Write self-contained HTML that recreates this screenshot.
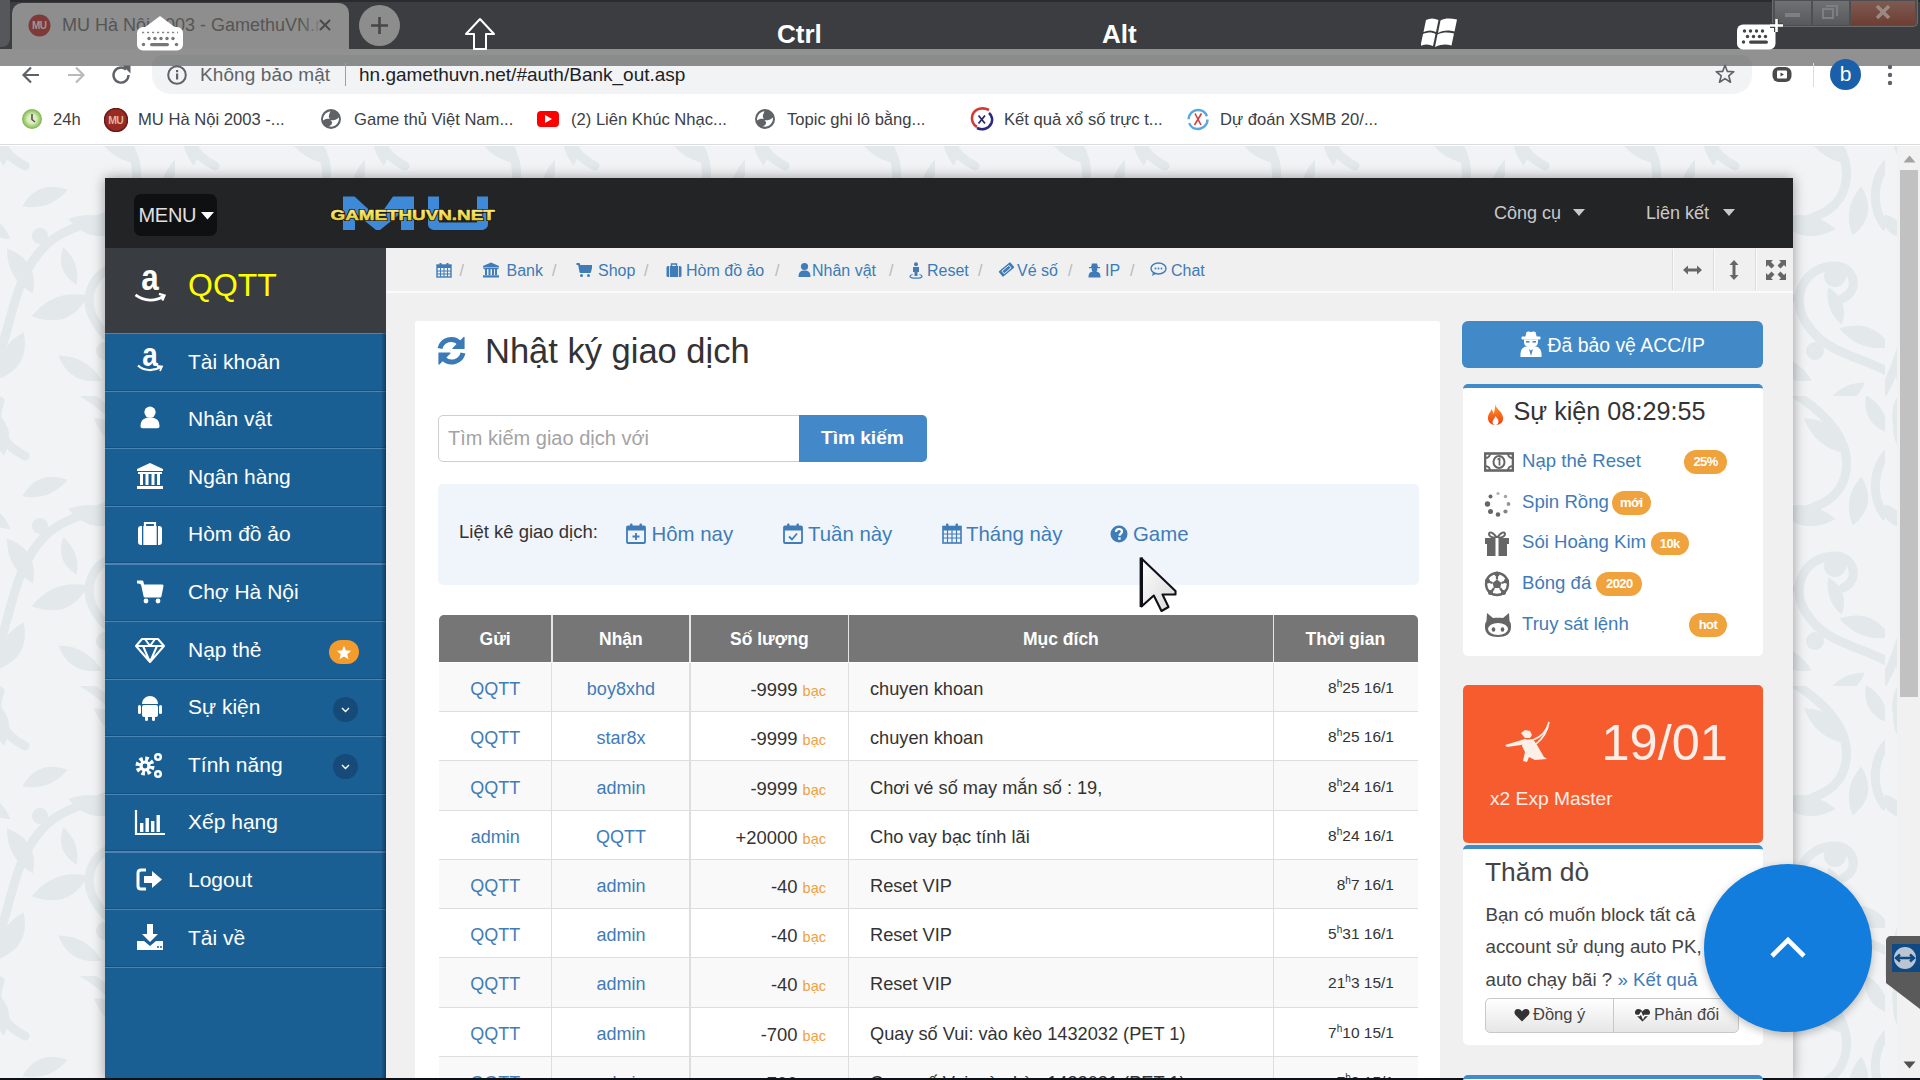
<!DOCTYPE html>
<html><head><meta charset="utf-8">
<style>
*{box-sizing:border-box;margin:0;padding:0}
html,body{width:1920px;height:1080px;overflow:hidden;font-family:"Liberation Sans",sans-serif;background:#fff}
.a{position:absolute}
.nw{white-space:nowrap}
/* browser chrome */
#tabstrip{left:0;top:0;width:1920px;height:49px;background:#3b3d40}
#tab{left:12px;top:3px;width:337px;height:50px;background:#8e8e8e;border-radius:10px 10px 0 0}
#band{left:0;top:49px;width:1920px;height:16.5px;background:#919191}
#toolbar{left:0;top:65px;width:1920px;height:32px;background:#fff}
#omni{left:152px;top:56px;width:1600px;height:38px;background:#f1f3f4;border-radius:19px}
#bm{left:0;top:97px;width:1920px;height:48px;background:#fff;border-bottom:1px solid #dadce0}
.bmt{font-size:16.6px;color:#3c4043;top:110px}
/* page */
#page{left:0;top:146px;width:1897px;height:934px;background:#f1f3f5}
#sb{left:1897px;top:146px;width:23px;height:934px;background:#f1f1f1}
#thumb{left:1900px;top:170px;width:18.2px;height:527px;background:#c1c1c1}
#cont{left:105px;top:178px;width:1688px;height:902px;background:#f0f0f0;box-shadow:0 0 12px rgba(0,0,0,.38)}
#nav{left:105px;top:178px;width:1688px;height:70px;background:#232426}
#side{left:105px;top:248px;width:281px;height:832px;background:#1a5f94}
#sidehead{left:105px;top:248px;width:281px;height:85px;background:#393c40}
.mi{left:105px;width:281px;height:58px;border-top:1px solid #4b82b0}
.mt{left:188px;font-size:21px;color:#fff}
.mic{left:133px;width:32px;text-align:center}
#bc{left:386px;top:248px;width:1407px;height:44.5px;background:#f0f0f0;border-bottom:2.5px solid #fafafa}
.bct{top:261.5px;font-size:16px;color:#3d7bb6}
.bcs{top:261.5px;font-size:16px;color:#b8b8b8}
#panel{left:415px;top:321px;width:1025px;height:760px;background:#fff;border-radius:3px}
.th{top:615px;height:48px;color:#fff;font-weight:bold;font-size:19px;text-align:center;line-height:48px}
.td{font-size:19px;line-height:49px}
.lk{color:#3d7ab5}
.dk{color:#333}
.bac{color:#f0ad4e;font-size:15px}
</style></head><body>
<!-- chrome -->
<div id="tabstrip" class="a"></div>
<div class="a" style="left:0;top:0;width:1920px;height:2px;background:#2a2b2d"></div>
<div class="a" style="left:0;top:0;width:10px;height:47px;background:#56575a;border-radius:0 0 8px 0"></div>
<div id="tab" class="a"></div>
<svg class="a" style="left:28px;top:14px" width="23" height="23" viewBox="0 0 23 23"><circle cx="11.5" cy="11.5" r="11" fill="#7d3a38"/><text x="11.5" y="15" font-family="Liberation Sans" font-weight="bold" font-size="10" fill="#a09890" text-anchor="middle" textLength="15">MU</text></svg>
<div class="a nw" style="left:62px;top:15px;font-size:18px;color:#555;width:258px;overflow:hidden">MU Hà Nội 2003 - GamethuVN.net</div>
<div class="a" style="left:300px;top:10px;width:25px;height:30px;background:linear-gradient(90deg,rgba(142,142,142,0),#8e8e8e)"></div>
<svg class="a" style="left:318px;top:18px" width="14" height="14" viewBox="0 0 14 14"><path d="M2 2L12 12M12 2L2 12" stroke="#4a4a4a" stroke-width="2"/></svg>
<div class="a" style="left:359px;top:5px;width:41px;height:41px;border-radius:50%;background:#8d8d8d"></div>
<svg class="a" style="left:369px;top:15px" width="21" height="21" viewBox="0 0 21 21"><path d="M10.5 2V19M2 10.5H19" stroke="#474747" stroke-width="2.6"/></svg>
<div id="toolbar" class="a"></div>
<div class="a" style="left:152px;top:65px;width:1600px;height:29px;background:#f1f3f4;border-radius:0 0 19px 19px"></div>
<div id="band" class="a"></div>
<div class="a" style="left:152px;top:55px;width:1600px;height:10.5px;background:#8a8b8b;border-radius:19px 19px 0 0"></div>
<!-- toolbar icons -->
<svg class="a" style="left:20px;top:64px" width="22" height="22" viewBox="0 0 22 22"><path d="M19 11H4M11 3.5L3.5 11L11 18.5" stroke="#5f6368" stroke-width="2.2" fill="none"/></svg>
<svg class="a" style="left:65px;top:64px" width="22" height="22" viewBox="0 0 22 22"><path d="M3 11H18M11 3.5L18.5 11L11 18.5" stroke="#b9babc" stroke-width="2.2" fill="none"/></svg>
<svg class="a" style="left:110px;top:64px" width="22" height="22" viewBox="0 0 22 22"><path d="M18.5 11A7.5 7.5 0 1 1 16 5.5" stroke="#5f6368" stroke-width="2.4" fill="none"/><path d="M12.5 1.5H20.5V9.5Z" fill="#5f6368"/></svg>
<svg class="a" style="left:166px;top:64px" width="22" height="22" viewBox="0 0 22 22"><circle cx="11" cy="11" r="8.8" stroke="#5f6368" stroke-width="2" fill="none"/><rect x="10" y="9.5" width="2.2" height="6" fill="#5f6368"/><rect x="10" y="6" width="2.2" height="2.2" fill="#5f6368"/></svg>
<div class="a nw" style="left:200px;top:64px;font-size:19px;color:#5f6368;letter-spacing:0.1px">Không bảo mật</div>
<div class="a" style="left:345px;top:63px;width:1px;height:23px;background:#9aa0a6"></div>
<div class="a nw" style="left:359px;top:64px;font-size:19px;color:#202124">hn.gamethuvn.net/#auth/Bank_out.asp</div>
<svg class="a" style="left:1714px;top:63px" width="22" height="22" viewBox="0 0 24 24"><path d="M12 2.5L14.6 9.2L21.6 9.5L16.1 14L18 21L12 17L6 21L7.9 14L2.4 9.5L9.4 9.2Z" stroke="#5f6368" stroke-width="1.8" fill="none" stroke-linejoin="round"/></svg>
<svg class="a" style="left:1771px;top:64px" width="22" height="21" viewBox="0 0 22 21"><rect x="1.5" y="3" width="19" height="15" rx="6" fill="#4a4a4a"/><rect x="6" y="6.5" width="10" height="8" rx="1" fill="#fff"/><path d="M9.5 8.5L13 10.5L9.5 12.5Z" fill="#4a4a4a"/></svg>
<div class="a" style="left:1813px;top:63px;width:1px;height:24px;background:#dadce0"></div>
<div class="a" style="left:1830px;top:59px;width:31px;height:31px;border-radius:50%;background:#1a5fa9;color:#fff;font-size:21px;text-align:center;line-height:30px">b</div>
<svg class="a" style="left:1885px;top:63px" width="10" height="24" viewBox="0 0 10 24"><circle cx="5" cy="4" r="2.2" fill="#5f6368"/><circle cx="5" cy="12" r="2.2" fill="#5f6368"/><circle cx="5" cy="20" r="2.2" fill="#5f6368"/></svg>
<!-- overlay band -->

<!-- keyboard OSK icons -->
<svg class="a" style="left:136px;top:15px" width="48" height="36" viewBox="0 0 48 36"><rect x="1" y="12" width="46" height="23.5" rx="6" fill="#fff"/><path d="M24 1L42 14.5H6Z" fill="#fff"/><path d="M6 17.5H42" stroke="#888" stroke-width="1.3" stroke-dasharray="2.2 2.8"/><g fill="#777"><circle cx="13" cy="23.5" r="1.7"/><circle cx="19" cy="23.5" r="1.7"/><circle cx="25" cy="23.5" r="1.7"/><circle cx="31" cy="23.5" r="1.7"/><circle cx="37" cy="23.5" r="1.7"/><circle cx="7.5" cy="29.5" r="1.7"/><circle cx="40.5" cy="29.5" r="1.7"/></g><rect x="14" y="28" width="19" height="3.2" rx="1.6" fill="#777"/></svg>
<svg class="a" style="left:464px;top:17px" width="32" height="34" viewBox="0 0 32 34"><path d="M16 2L30 17H22V32H10V17H2Z" stroke="#fff" stroke-width="2" fill="none" stroke-linejoin="round"/></svg>
<div class="a nw" style="left:777px;top:19px;font-size:26px;font-weight:bold;color:#fff">Ctrl</div>
<div class="a nw" style="left:1102px;top:19px;font-size:26px;font-weight:bold;color:#fff">Alt</div>
<svg class="a" style="left:1421px;top:16px" width="38" height="36" viewBox="0 0 38 36"><g fill="#fff"><path d="M5 4C9 2 13 2 17.5 4L15 16C11 14 7 14 2.5 16Z"/><path d="M19.5 4.5C24 2 29 2 36 3.5L33.5 15.5C27 14 23 14 17 17Z"/><path d="M2 18C7 16 11 16 14.5 18L12 30C8 28 4 28 -0.5 30Z"/><path d="M16.5 18.5C22 16 27 16 33 17.5L30.5 29.5C25 28 21 28 14 31Z"/></g></svg>

<!-- window controls -->
<div class="a" style="left:1772px;top:0;width:146px;height:27px;border:1px solid #6a6b6d;border-top:0;border-radius:0 0 5px 5px;background:#4e4f52"></div>
<div class="a" style="left:1775px;top:1px;width:36px;height:24px;background:linear-gradient(#707173,#58595c)"></div>
<div class="a" style="left:1785px;top:13px;width:15px;height:4px;background:#7e7f81"></div>
<div class="a" style="left:1813px;top:1px;width:36px;height:24px;background:linear-gradient(#707173,#58595c)"></div>
<div class="a" style="left:1822px;top:8px;width:12px;height:11px;border:2.5px solid #7e7f81"></div>
<div class="a" style="left:1826px;top:5px;width:12px;height:11px;border-top:2px solid #7e7f81;border-right:2px solid #7e7f81"></div>
<div class="a" style="left:1851px;top:1px;width:64px;height:24px;background:linear-gradient(#7e5b52,#6e3e33)"></div>
<svg class="a" style="left:1875px;top:5px" width="16" height="14" viewBox="0 0 16 14"><path d="M2 1L14 13M14 1L2 13" stroke="#9a8a86" stroke-width="3.5"/></svg>
<svg class="a" style="left:1735px;top:16px" width="50" height="36" viewBox="0 0 50 36"><rect x="2" y="8.5" width="38.5" height="25" rx="6" fill="#fff"/><g fill="#444"><circle cx="9.5" cy="15" r="1.7"/><circle cx="15.5" cy="15" r="1.7"/><circle cx="21.5" cy="15" r="1.7"/><circle cx="27.5" cy="15" r="1.7"/><circle cx="12.5" cy="20.5" r="1.7"/><circle cx="18.5" cy="20.5" r="1.7"/><circle cx="24.5" cy="20.5" r="1.7"/><circle cx="30.5" cy="20.5" r="1.7"/><circle cx="8.5" cy="26" r="1.7"/></g><rect x="14" y="24.5" width="19" height="3.2" rx="1.6" fill="#444"/><path d="M41.5 3V16M35 9.5H48" stroke="#444" stroke-width="5"/><path d="M41.5 3V16M35 9.5H48" stroke="#fff" stroke-width="2.6"/></svg>
<!-- bookmarks -->
<div id="bm" class="a"></div>
<div class="a" style="left:22px;top:109px;width:20px;height:20px;border-radius:50%;background:radial-gradient(circle,#ddeec0 30%,#7ab648 70%)"></div>
<svg class="a" style="left:24px;top:111px" width="16" height="16" viewBox="0 0 16 16"><path d="M8 3V8.5L11 11" stroke="#555" stroke-width="1.6" fill="none"/></svg>
<div class="a nw bmt" style="left:53px">24h</div>
<svg class="a" style="left:104px;top:108px" width="24" height="24" viewBox="0 0 23 23"><circle cx="11.5" cy="11.5" r="11" fill="#9a2a24"/><circle cx="11.5" cy="11.5" r="11" fill="none" stroke="#6a1a18" stroke-width="1.5"/><text x="11.5" y="15" font-family="Liberation Sans" font-weight="bold" font-size="10" fill="#d8b8a0" text-anchor="middle" textLength="15">MU</text></svg>
<div class="a nw bmt" style="left:138px">MU Hà Nội 2003 -...</div>
<svg class="a" style="left:320px;top:108px" width="22" height="22" viewBox="0 0 22 22"><circle cx="11" cy="11" r="10" fill="#5f6368"/><path d="M3 12.5C2.8 8 5.5 4 10.5 3.2C10 4.5 9.5 5.5 9 7C8.5 8.5 9 10 10 11C7.5 10.5 5 11 3 12.5Z" fill="#fff"/><path d="M19 9.5C19.3 14 16.5 18 11.5 18.8L8.5 18.3C10 18 11.5 17 12 15.5C12.5 14 11.5 13 10.5 12.2C13 12.5 16.5 12 19 9.5Z" fill="#fff"/></svg>
<div class="a nw bmt" style="left:354px">Game thủ Việt Nam...</div>
<div class="a" style="left:537px;top:111px;width:22px;height:16px;border-radius:4px;background:#f00"></div>
<svg class="a" style="left:544px;top:114px" width="9" height="10" viewBox="0 0 9 10"><path d="M1 1L8 5L1 9Z" fill="#fff"/></svg>
<div class="a nw bmt" style="left:571px">(2) Liên Khúc Nhạc...</div>
<svg class="a" style="left:754px;top:108px" width="22" height="22" viewBox="0 0 22 22"><circle cx="11" cy="11" r="10" fill="#5f6368"/><path d="M3 12.5C2.8 8 5.5 4 10.5 3.2C10 4.5 9.5 5.5 9 7C8.5 8.5 9 10 10 11C7.5 10.5 5 11 3 12.5Z" fill="#fff"/><path d="M19 9.5C19.3 14 16.5 18 11.5 18.8L8.5 18.3C10 18 11.5 17 12 15.5C12.5 14 11.5 13 10.5 12.2C13 12.5 16.5 12 19 9.5Z" fill="#fff"/></svg>
<div class="a nw bmt" style="left:787px">Topic ghi lô bằng...</div>
<svg class="a" style="left:969px;top:107px" width="26" height="24" viewBox="0 0 26 24"><path d="M20 3C14 0 6 1 3.5 8C2 13 4 18 8 20" stroke="#d33a32" stroke-width="2.6" fill="none"/><path d="M8 21C13 23.5 20 22 22.5 16C24 12 22.5 8 20 6" stroke="#2a2a80" stroke-width="2.6" fill="none"/><path d="M9.5 8.5L16 16.5M16 8.5L9.5 16.5" stroke="#2a2a70" stroke-width="1.8"/></svg>
<div class="a nw bmt" style="left:1004px">Kết quả xổ số trực t...</div>
<svg class="a" style="left:1186px;top:107px" width="24" height="24" viewBox="0 0 24 24"><circle cx="12" cy="12.5" r="9.5" stroke="#58a8e0" stroke-width="2.4" fill="none" stroke-dasharray="26 4"/><path d="M9 6.5L15 18M15.5 6.5L8.5 18" stroke="#d04040" stroke-width="1.6"/></svg>
<div class="a nw bmt" style="left:1220px">Dự đoán XSMB 20/...</div>
<!-- page -->
<div id="page" class="a"></div>
<svg class="a" style="left:0;top:146px" width="1897" height="934"><defs><pattern id="fl" width="190" height="290" patternUnits="userSpaceOnUse" x="-15" y="-40"><path d="M-10 300C30 240 20 180 60 140C90 110 140 120 150 80C160 40 120 10 95 -5" stroke="#e3e8eb" stroke-width="9" fill="none" stroke-linecap="round"/><path d="M200 270C170 250 130 250 110 215C95 190 110 160 140 160C160 160 165 185 148 192" stroke="#e3e8eb" stroke-width="9" fill="none" stroke-linecap="round"/><path d="M40 60C20 50 5 30 15 5" stroke="#e3e8eb" stroke-width="9" fill="none" stroke-linecap="round"/><path d="M190 120C175 100 178 70 195 55" stroke="#e3e8eb" stroke-width="9" fill="none" stroke-linecap="round"/><path d="M11.2 273.8Q45.8 262.0 38.8 226.2Q10.5 241.6 11.2 273.8Z" fill="#e3e8eb"/><path d="M46.8 210.3Q83.9 224.4 103.2 189.7Q68.8 182.9 46.8 210.3Z" fill="#e3e8eb"/><path d="M48.0 187.5Q54.1 154.0 22.0 142.5Q21.7 172.7 48.0 187.5Z" fill="#e3e8eb"/><path d="M83.4 113.0Q107.8 141.6 140.6 123.0Q114.9 101.5 83.4 113.0Z" fill="#e3e8eb"/><path d="M157.7 129.6Q183.7 108.8 166.3 80.4Q146.8 102.3 157.7 129.6Z" fill="#e3e8eb"/><path d="M151.1 57.7Q144.1 23.1 108.9 22.3Q120.1 51.8 151.1 57.7Z" fill="#e3e8eb"/><path d="M82.6 83.8Q53.2 73.2 37.4 100.2Q64.8 105.2 82.6 83.8Z" fill="#e3e8eb"/><path d="M195.8 241.4Q177.5 211.3 144.2 222.6Q164.7 246.5 195.8 241.4Z" fill="#e3e8eb"/><path d="M73.3 249.5Q85.0 279.3 116.7 274.5Q102.0 249.9 73.3 249.5Z" fill="#e3e8eb"/><path d="M130.1 299.5Q159.0 303.6 169.9 276.5Q143.7 277.1 130.1 299.5Z" fill="#e3e8eb"/><path d="M18.8 59.7Q32.7 34.9 11.2 16.3Q2.6 40.2 18.8 59.7Z" fill="#e3e8eb"/><path d="M171.0 -1.1Q166.4 27.0 193.0 37.1Q192.9 11.7 171.0 -1.1Z" fill="#e3e8eb"/><path d="M78.2 141.2Q70.0 165.5 91.8 178.8Q95.5 156.2 78.2 141.2Z" fill="#e3e8eb"/><path d="M146.8 218.8Q155.0 194.5 133.2 181.2Q129.5 203.8 146.8 218.8Z" fill="#e3e8eb"/><path d="M-5.3 107.1Q-0.3 132.3 25.3 132.9Q17.2 111.4 -5.3 107.1Z" fill="#e3e8eb"/><circle cx="140" cy="170" r="11" fill="#e3e8eb"/><circle cx="55" cy="130" r="8" fill="#e3e8eb"/><circle cx="120" cy="245" r="9" fill="#e3e8eb"/></pattern></defs><rect width="1897" height="934" fill="url(#fl)"/></svg>
<div id="sb" class="a"></div>
<div id="thumb" class="a"></div>
<div id="cont" class="a"></div>
<div id="nav" class="a"></div>
<div class="a" style="left:134px;top:194px;width:83px;height:42px;background:#0f1012;border-radius:7px"></div>
<div class="a nw" style="left:138.5px;top:204.3px;font-size:20px;color:#e0e0e0;letter-spacing:-0.3px">MENU</div>
<svg class="a" style="left:200.5px;top:212px" width="13" height="8" viewBox="0 0 13 8"><path d="M0 0H13L6.5 7.5Z" fill="#fff"/></svg>
<svg class="a" style="left:328px;top:194px" width="170" height="40" viewBox="0 0 170 40">
<defs><linearGradient id="yg" x1="0" y1="0" x2="0" y2="1"><stop offset="0" stop-color="#fff6b0"/><stop offset=".5" stop-color="#f5e04a"/><stop offset="1" stop-color="#d8b818"/></linearGradient></defs>
<g fill="#3f8ad8"><path d="M15 2.5H26.5L50 24L65 2.5H86V36H73V19L52 36H48L27 19V36H15Z"/><path d="M100 2.5H111V28.5H149V2.5H160V30C160 33.5 157.5 36 153 36H107C102.5 36 100 33.5 100 30Z"/></g>
<g transform="translate(2.5,26.3) scale(1.29,1)" font-family="Liberation Sans" font-weight="bold" font-size="14.6"><text fill="#111" stroke="#111" stroke-width="2">GAMETHUVN.NET</text><text fill="url(#yg)" stroke="#f0dc50" stroke-width="0.5">GAMETHUVN.NET</text></g></svg>
<div class="a nw" style="left:1494px;top:203px;font-size:18px;color:#c9c9c9">Công cụ</div>
<svg class="a" style="left:1573px;top:209px" width="12" height="8" viewBox="0 0 12 8"><path d="M0 0H12L6 7Z" fill="#c9c9c9"/></svg>
<div class="a nw" style="left:1646px;top:203px;font-size:18px;color:#c9c9c9">Liên kết</div>
<svg class="a" style="left:1723px;top:209px" width="12" height="8" viewBox="0 0 12 8"><path d="M0 0H12L6 7Z" fill="#c9c9c9"/></svg>
<div id="side" class="a"></div>
<div id="sidehead" class="a"></div>
<div class="a" style="left:131px;top:266px"><svg width="38" height="40" viewBox="0 0 34 34"><text transform="translate(17,20.6) scale(0.85,1)" font-family="Liberation Sans" font-weight="bold" font-size="33" fill="#fff" text-anchor="middle">a</text><path d="M4 25C12 31 22 31 29 26" stroke="#fff" stroke-width="2.4" fill="none"/><path d="M25 24L30 25.5L28 30" stroke="#fff" stroke-width="2" fill="none"/></svg></div>
<div class="a nw" style="left:188px;top:267px;font-size:32px;color:#ffff00">QQTT</div>
<div class="a" style="left:105px;top:333.0px;width:281px;height:1.2px;background:#4a84b4"></div>
<div class="a" style="left:133px;top:345.0px"><svg width="34" height="34" viewBox="0 0 34 34"><text transform="translate(17,20.5) scale(0.82,1)" font-family="Liberation Sans" font-weight="bold" font-size="34" fill="#fff" text-anchor="middle">a</text><path d="M5 20.5C11 26 20 26.5 28 22" stroke="#fff" stroke-width="2.2" fill="none"/><path d="M24 21L29 21.5L27 26" stroke="#fff" stroke-width="1.8" fill="none"/></svg></div>
<div class="a nw mt" style="top:349.5px">Tài khoản</div>
<div class="a" style="left:105px;top:389.6px;width:281px;height:1px;background:#17507d"></div><div class="a" style="left:105px;top:390.6px;width:281px;height:1.2px;background:#4a84b4"></div>
<div class="a" style="left:133px;top:402.6px"><svg width="34" height="34" viewBox="0 0 34 34"><circle cx="17" cy="9.2" r="5.6" fill="#fff"/><path d="M7.5 23.5C7.5 17 11 14.5 17 14.5C23 14.5 26.5 17 26.5 23.5C26.5 24.6 25.6 25.2 24.5 25.2H9.5C8.4 25.2 7.5 24.6 7.5 23.5Z" fill="#fff"/></svg></div>
<div class="a nw mt" style="top:407.1px">Nhân vật</div>
<div class="a" style="left:105px;top:447.2px;width:281px;height:1px;background:#17507d"></div><div class="a" style="left:105px;top:448.2px;width:281px;height:1.2px;background:#4a84b4"></div>
<div class="a" style="left:133px;top:460.2px"><svg width="34" height="34" viewBox="0 0 34 34"><path d="M17 3L30 9V11H4V9Z" fill="#fff"/><rect x="4" y="26" width="26" height="3" fill="#fff"/><rect x="5" y="12" width="24" height="2" fill="#fff"/><g fill="#fff"><rect x="7" y="14" width="3" height="11"/><rect x="12.5" y="14" width="3" height="11"/><rect x="18.5" y="14" width="3" height="11"/><rect x="24" y="14" width="3" height="11"/></g></svg></div>
<div class="a nw mt" style="top:464.7px">Ngân hàng</div>
<div class="a" style="left:105px;top:504.8px;width:281px;height:1px;background:#17507d"></div><div class="a" style="left:105px;top:505.8px;width:281px;height:1.2px;background:#4a84b4"></div>
<div class="a" style="left:133px;top:517.8px"><svg width="34" height="34" viewBox="0 0 34 34"><path d="M12 8V5H22V8" stroke="#fff" stroke-width="2.2" fill="none"/><rect x="5" y="8" width="24" height="19" rx="3" fill="#fff"/><rect x="9" y="8" width="1.3" height="19" fill="#1a5f95"/><rect x="23.7" y="8" width="1.3" height="19" fill="#1a5f95"/></svg></div>
<div class="a nw mt" style="top:522.3px">Hòm đồ ảo</div>
<div class="a" style="left:105px;top:562.4px;width:281px;height:1px;background:#17507d"></div><div class="a" style="left:105px;top:563.4px;width:281px;height:1.2px;background:#4a84b4"></div>
<div class="a" style="left:133px;top:575.4px"><svg width="34" height="34" viewBox="0 0 34 34"><path d="M4 7H9L12 21H27L29 11H10" stroke="#fff" stroke-width="3" fill="#fff" stroke-linejoin="round"/><circle cx="13" cy="26" r="2.4" fill="#fff"/><circle cx="25" cy="26" r="2.4" fill="#fff"/></svg></div>
<div class="a nw mt" style="top:579.9px">Chợ Hà Nội</div>
<div class="a" style="left:105px;top:620.0px;width:281px;height:1px;background:#17507d"></div><div class="a" style="left:105px;top:621.0px;width:281px;height:1.2px;background:#4a84b4"></div>
<div class="a" style="left:133px;top:633.0px"><svg width="34" height="34" viewBox="0 0 34 34"><path d="M9 6H25L31 13L17 29L3 13Z M3 13H31 M12 6L17 13L22 6 M10 13L17 29L24 13" stroke="#fff" stroke-width="2" fill="none" stroke-linejoin="round"/></svg></div>
<div class="a nw mt" style="top:637.5px">Nạp thẻ</div>
<div class="a" style="left:105px;top:677.6px;width:281px;height:1px;background:#17507d"></div><div class="a" style="left:105px;top:678.6px;width:281px;height:1.2px;background:#4a84b4"></div>
<div class="a" style="left:133px;top:690.6px"><svg width="34" height="34" viewBox="0 0 34 34"><path d="M9 13C9 8 13 5 17 5C21 5 25 8 25 13Z" fill="#fff"/><rect x="9" y="14" width="16" height="12" rx="2" fill="#fff"/><rect x="5" y="14" width="3" height="9" rx="1.5" fill="#fff"/><rect x="26" y="14" width="3" height="9" rx="1.5" fill="#fff"/><rect x="12" y="25" width="3" height="5" rx="1.5" fill="#fff"/><rect x="19" y="25" width="3" height="5" rx="1.5" fill="#fff"/></svg></div>
<div class="a nw mt" style="top:695.1px">Sự kiện</div>
<div class="a" style="left:105px;top:735.2px;width:281px;height:1px;background:#17507d"></div><div class="a" style="left:105px;top:736.2px;width:281px;height:1.2px;background:#4a84b4"></div>
<div class="a" style="left:133px;top:748.2px"><svg width="34" height="34" viewBox="0 0 34 34"><circle cx="12" cy="18" r="7" fill="none" stroke="#fff" stroke-width="5" stroke-dasharray="3.2 2.3"/><circle cx="12" cy="18" r="5.5" fill="#fff"/><circle cx="12" cy="18" r="2.4" fill="#1a5f95"/><circle cx="25" cy="9" r="4" fill="#fff"/><circle cx="25" cy="9" r="1.5" fill="#1a5f95"/><circle cx="25" cy="26" r="4" fill="#fff"/><circle cx="25" cy="26" r="1.5" fill="#1a5f95"/></svg></div>
<div class="a nw mt" style="top:752.7px">Tính năng</div>
<div class="a" style="left:105px;top:792.8px;width:281px;height:1px;background:#17507d"></div><div class="a" style="left:105px;top:793.8px;width:281px;height:1.2px;background:#4a84b4"></div>
<div class="a" style="left:133px;top:805.8px"><svg width="34" height="34" viewBox="0 0 34 34"><path d="M3 4V28H32" stroke="#fff" stroke-width="2.2" fill="none"/><g fill="#fff"><rect x="7" y="17" width="3.4" height="9"/><rect x="12.5" y="12" width="3.4" height="14"/><rect x="18" y="15" width="3.4" height="11"/><rect x="23.5" y="9" width="3.4" height="17"/></g></svg></div>
<div class="a nw mt" style="top:810.3px">Xếp hạng</div>
<div class="a" style="left:105px;top:850.4px;width:281px;height:1px;background:#17507d"></div><div class="a" style="left:105px;top:851.4px;width:281px;height:1.2px;background:#4a84b4"></div>
<div class="a" style="left:133px;top:863.4px"><svg width="34" height="34" viewBox="0 0 34 34"><path d="M13 7H8C6 7 5 8 5 10V23C5 25 6 26 8 26H13" stroke="#fff" stroke-width="3" fill="none"/><path d="M11 13H19V8L29 16.5L19 25V20H11Z" fill="#fff"/></svg></div>
<div class="a nw mt" style="top:867.9px">Logout</div>
<div class="a" style="left:105px;top:908.0px;width:281px;height:1px;background:#17507d"></div><div class="a" style="left:105px;top:909.0px;width:281px;height:1.2px;background:#4a84b4"></div>
<div class="a" style="left:133px;top:921.0px"><svg width="34" height="34" viewBox="0 0 34 34"><path d="M14 3H20V13H25L17 21L9 13H14Z" fill="#fff"/><path d="M4 20H11L17 25L23 20H30V29H4Z" fill="#fff"/><circle cx="25" cy="26" r="1" fill="#1a5f95"/><circle cx="28" cy="26" r="1" fill="#1a5f95"/></svg></div>
<div class="a nw mt" style="top:925.5px">Tải về</div>
<div class="a" style="left:105px;top:965.6px;width:281px;height:1px;background:#17507d"></div><div class="a" style="left:105px;top:966.6px;width:281px;height:1.2px;background:#4a84b4"></div>
<div class="a" style="left:329px;top:640px;width:30px;height:24px;border-radius:12px;background:#f39c2c"></div>
<svg class="a" style="left:336px;top:644.5px" width="16" height="15" viewBox="0 0 24 23"><path d="M12 1L15 8.5L23 9L17 14L19 22L12 17.5L5 22L7 14L1 9L9 8.5Z" fill="#fff"/></svg>
<div class="a" style="left:333.4px;top:697.0px;width:24.6px;height:24.6px;border-radius:50%;background:#164b79"></div>
<svg class="a" style="left:341.2px;top:706.8px" width="9" height="6" viewBox="0 0 9 6"><path d="M1 1L4.5 4.5L8 1" stroke="#fff" stroke-width="1.4" fill="none"/></svg>
<div class="a" style="left:333.4px;top:754.4px;width:24.6px;height:24.6px;border-radius:50%;background:#164b79"></div>
<svg class="a" style="left:341.2px;top:764.2px" width="9" height="6" viewBox="0 0 9 6"><path d="M1 1L4.5 4.5L8 1" stroke="#fff" stroke-width="1.4" fill="none"/></svg>
<div id="bc" class="a"></div>
<div class="a" style="left:1672.1px;top:249px;width:1.2px;height:41px;background:#dcdcdc"></div><div class="a" style="left:1673.3px;top:249px;width:1.2px;height:41px;background:#fbfbfb"></div>
<div class="a" style="left:1713.1px;top:249px;width:1.2px;height:41px;background:#dcdcdc"></div><div class="a" style="left:1714.3px;top:249px;width:1.2px;height:41px;background:#fbfbfb"></div>
<div class="a" style="left:1755.1px;top:249px;width:1.2px;height:41px;background:#dcdcdc"></div><div class="a" style="left:1756.3px;top:249px;width:1.2px;height:41px;background:#fbfbfb"></div>
<svg class="a" style="left:1682px;top:263px" width="21" height="14" viewBox="0 0 21 14"><path d="M1 7L6 2.5V5.5H15V2.5L20 7L15 11.5V8.5H6V11.5Z" fill="#666"/></svg>
<svg class="a" style="left:1727px;top:259px" width="14" height="22" viewBox="0 0 14 22"><path d="M7 1L11.5 6H8.5V16H11.5L7 21L2.5 16H5.5V6H2.5Z" fill="#666"/></svg>
<svg class="a" style="left:1765px;top:259px" width="22" height="22" viewBox="0 0 22 22"><g fill="#666"><path d="M1 1H8L6 3L9.5 6.5L6.5 9.5L3 6L1 8Z"/><path d="M21 1H14L16 3L12.5 6.5L15.5 9.5L19 6L21 8Z"/><path d="M1 21H8L6 19L9.5 15.5L6.5 12.5L3 16L1 14Z"/><path d="M21 21H14L16 19L12.5 15.5L15.5 12.5L19 16L21 14Z"/></g></svg>
<div class="a" style="left:435.6px;top:262px;line-height:0"><svg width="16" height="16" viewBox="0 0 16 16"><rect x="1" y="3" width="14" height="12" fill="none" stroke="#3f7cb8" stroke-width="1.4"/><rect x="1" y="3" width="14" height="3" fill="#3f7cb8"/><path d="M1 9H15M1 12H15M4.5 6V15M8 6V15M11.5 6V15" stroke="#3f7cb8" stroke-width="1"/><rect x="3.5" y="1" width="2" height="3" fill="#3f7cb8"/><rect x="10.5" y="1" width="2" height="3" fill="#3f7cb8"/></svg></div>
<div class="a" style="left:482px;top:262px;line-height:0"><svg width="18" height="16" viewBox="0 0 18 16"><path d="M9 0.5L17 4V5.5H1V4Z" fill="#3f7cb8"/><rect x="1.5" y="6" width="15" height="1.2" fill="#3f7cb8"/><g fill="#3f7cb8"><rect x="3" y="7" width="2" height="6"/><rect x="6.5" y="7" width="2" height="6"/><rect x="10" y="7" width="2" height="6"/><rect x="13" y="7" width="2" height="6"/></g><rect x="1" y="13.3" width="16" height="2.2" fill="#3f7cb8"/></svg></div>
<div class="a nw bct" style="left:506.5px">Bank</div>
<div class="a" style="left:576px;top:262px;line-height:0"><svg width="16" height="16" viewBox="0 0 16 16"><path d="M0.5 2H3L4.5 10H14L15.5 4H4" stroke="#3f7cb8" stroke-width="2" fill="#3f7cb8" stroke-linejoin="round"/><circle cx="5.5" cy="13.5" r="1.5" fill="#3f7cb8"/><circle cx="12.5" cy="13.5" r="1.5" fill="#3f7cb8"/></svg></div>
<div class="a nw bct" style="left:598px">Shop</div>
<div class="a" style="left:666px;top:262px;line-height:0"><svg width="16" height="16" viewBox="0 0 16 16"><path d="M5.5 4V2H10.5V4" stroke="#3f7cb8" stroke-width="1.4" fill="none"/><rect x="0.5" y="4" width="15" height="11" rx="1.5" fill="#3f7cb8"/><rect x="3" y="4" width="0.8" height="11" fill="#f0f0f0"/><rect x="12.2" y="4" width="0.8" height="11" fill="#f0f0f0"/></svg></div>
<div class="a nw bct" style="left:686px">Hòm đồ ảo</div>
<div class="a" style="left:797.5px;top:262px;line-height:0"><svg width="13" height="16" viewBox="0 0 13 16"><circle cx="6.5" cy="4.5" r="3.6" fill="#3f7cb8"/><path d="M0.5 15C0.5 10 2.5 8.5 6.5 8.5C10.5 8.5 12.5 10 12.5 15Z" fill="#3f7cb8"/></svg></div>
<div class="a nw bct" style="left:812px">Nhân vật</div>
<div class="a" style="left:908.5px;top:262px;line-height:0"><svg width="14" height="17" viewBox="0 0 14 17"><circle cx="7" cy="2.3" r="2" fill="#3f7cb8"/><path d="M4 5H10V10H8.5V14H5.5V10H4Z" fill="#3f7cb8"/><path d="M3.5 12.5C1.5 13 1 13.5 1 14.2C1 15.3 3.7 16.2 7 16.2C10.3 16.2 13 15.3 13 14.2C13 13.5 12.5 13 10.5 12.5" stroke="#3f7cb8" stroke-width="1.2" fill="none"/></svg></div>
<div class="a nw bct" style="left:927px">Reset</div>
<div class="a" style="left:997.5px;top:262px;line-height:0"><svg width="17" height="15" viewBox="0 0 17 15"><g transform="rotate(-40 8.5 7.5)"><rect x="1" y="4" width="15" height="7" rx="1" fill="#3f7cb8"/><rect x="4" y="5.8" width="9" height="3.4" fill="none" stroke="#f0f0f0" stroke-width="0.9"/></g></svg></div>
<div class="a nw bct" style="left:1017px">Vé số</div>
<div class="a" style="left:1087.5px;top:262px;line-height:0"><svg width="13" height="16" viewBox="0 0 13 16"><path d="M3 5L4 1.5H9L10 5Z" fill="#3f7cb8"/><rect x="1" y="5" width="11" height="1.2" fill="#3f7cb8"/><circle cx="6.5" cy="7.5" r="2.8" fill="#3f7cb8"/><path d="M0.5 15.5C0.5 11 2 9.5 6.5 9.5C11 9.5 12.5 11 12.5 15.5Z" fill="#3f7cb8"/></svg></div>
<div class="a nw bct" style="left:1105px">IP</div>
<div class="a" style="left:1149.5px;top:262px;line-height:0"><svg width="17" height="15" viewBox="0 0 17 15"><ellipse cx="8.5" cy="6.5" rx="7.5" ry="5.5" fill="none" stroke="#3f7cb8" stroke-width="1.4"/><path d="M3 10.5L2 14L6.5 11.5" fill="#3f7cb8"/><circle cx="5.5" cy="6.5" r="0.9" fill="#3f7cb8"/><circle cx="8.5" cy="6.5" r="0.9" fill="#3f7cb8"/><circle cx="11.5" cy="6.5" r="0.9" fill="#3f7cb8"/></svg></div>
<div class="a nw bct" style="left:1171px">Chat</div>
<div class="a nw bcs" style="left:459.6px">/</div>
<div class="a nw bcs" style="left:552px">/</div>
<div class="a nw bcs" style="left:644px">/</div>
<div class="a nw bcs" style="left:775px">/</div>
<div class="a nw bcs" style="left:889px">/</div>
<div class="a nw bcs" style="left:978px">/</div>
<div class="a nw bcs" style="left:1068px">/</div>
<div class="a nw bcs" style="left:1130px">/</div>
<div id="panel" class="a"></div>
<svg class="a" style="left:436px;top:335px" width="31" height="31" viewBox="0 0 31 31"><path d="M4 13.5A11.5 11.5 0 0 1 23.5 8" stroke="#3a7ab8" stroke-width="5" fill="none"/><path d="M28 2.5V13.5H17Z" fill="#3a7ab8" stroke="#3a7ab8" stroke-width="1.2" stroke-linejoin="round"/><path d="M27 18A11.5 11.5 0 0 1 7.5 23.5" stroke="#3a7ab8" stroke-width="5" fill="none"/><path d="M3 29V18H14Z" fill="#3a7ab8" stroke="#3a7ab8" stroke-width="1.2" stroke-linejoin="round"/></svg>
<div class="a nw" style="left:485px;top:332px;font-size:34.5px;color:#333">Nhật ký giao dịch</div>
<div class="a" style="left:438px;top:415px;width:365px;height:47px;border:1.2px solid #cfcfcf;border-radius:5px 0 0 5px;background:#fff"></div>
<div class="a nw" style="left:448px;top:427px;font-size:20px;color:#a3a3a3">Tìm kiếm giao dịch với</div>
<div class="a" style="left:799px;top:415px;width:127.5px;height:47px;background:#4389c9;border-radius:0 5px 5px 0"></div>
<div class="a nw" style="left:821px;top:427px;font-size:19.1px;color:#fff;font-weight:bold">Tìm kiếm</div>
<div class="a" style="left:437.5px;top:484px;width:981px;height:100.5px;background:#f0f5fb;border-radius:5px"></div>
<div class="a nw" style="left:459px;top:521px;font-size:18.5px;color:#333">Liệt kê giao dịch:</div>
<div class="a" style="left:626px;top:523px;line-height:0"><svg width="20" height="21" viewBox="0 0 20 21"><rect x="1" y="3.5" width="18" height="16.5" rx="1" fill="none" stroke="#3f7cb8" stroke-width="1.8"/><rect x="1" y="3.5" width="18" height="4" fill="#3f7cb8"/><rect x="4" y="0.5" width="2.5" height="4.5" rx="1" fill="#3f7cb8"/><rect x="13.5" y="0.5" width="2.5" height="4.5" rx="1" fill="#3f7cb8"/><path d="M10 10V17M6.5 13.5H13.5" stroke="#3f7cb8" stroke-width="1.8"/></svg></div>
<div class="a" style="left:783px;top:523px;line-height:0"><svg width="20" height="21" viewBox="0 0 20 21"><rect x="1" y="3.5" width="18" height="16.5" rx="1" fill="none" stroke="#3f7cb8" stroke-width="1.8"/><rect x="1" y="3.5" width="18" height="4" fill="#3f7cb8"/><rect x="4" y="0.5" width="2.5" height="4.5" rx="1" fill="#3f7cb8"/><rect x="13.5" y="0.5" width="2.5" height="4.5" rx="1" fill="#3f7cb8"/><path d="M6 13.5L9 16.5L14 10.5" stroke="#3f7cb8" stroke-width="1.8" fill="none"/></svg></div>
<div class="a" style="left:942px;top:523px;line-height:0"><svg width="20" height="21" viewBox="0 0 20 21"><rect x="1" y="3.5" width="18" height="16.5" fill="none" stroke="#3f7cb8" stroke-width="1.6"/><rect x="1" y="3.5" width="18" height="4" fill="#3f7cb8"/><path d="M1 11H19M1 15H19M5.5 7V20M10 7V20M14.5 7V20" stroke="#3f7cb8" stroke-width="1.2"/><rect x="4" y="0.5" width="2.5" height="4.5" rx="1" fill="#3f7cb8"/><rect x="13.5" y="0.5" width="2.5" height="4.5" rx="1" fill="#3f7cb8"/></svg></div>
<div class="a" style="left:1110px;top:525px;line-height:0"><svg width="18" height="18" viewBox="0 0 18 18"><circle cx="9" cy="9" r="8.5" fill="#3f7cb8"/><path d="M6 7C6 5 7.3 4 9 4C10.8 4 12 5 12 6.6C12 8.5 9.5 8.8 9.5 10.8" stroke="#fff" stroke-width="2.2" fill="none"/><rect x="8.2" y="12.3" width="2.4" height="2.4" fill="#fff"/></svg></div>
<div class="a nw" style="left:651.5px;top:523px;font-size:20.4px;color:#3f7cb8">Hôm nay</div>
<div class="a nw" style="left:808px;top:523px;font-size:20.4px;color:#3f7cb8">Tuần này</div>
<div class="a nw" style="left:966px;top:523px;font-size:20.4px;color:#3f7cb8">Tháng này</div>
<div class="a nw" style="left:1133px;top:523px;font-size:20.4px;color:#3f7cb8">Game</div>
<div class="a" style="left:438.5px;top:614.6px;width:979px;height:47.6px;background:#767676;border-radius:5px 5px 0 0"></div>
<div class="a" style="left:551.1999999999999px;top:614.6px;width:1.4px;height:47.6px;background:#e6e6e6"></div>
<div class="a" style="left:689.4px;top:614.6px;width:1.4px;height:47.6px;background:#e6e6e6"></div>
<div class="a" style="left:848.0px;top:614.6px;width:1.4px;height:47.6px;background:#e6e6e6"></div>
<div class="a" style="left:1272.6000000000001px;top:614.6px;width:1.4px;height:47.6px;background:#e6e6e6"></div>
<div class="a nw th" style="left:438.5px;width:113.29999999999995px;font-size:17.5px">Gửi</div>
<div class="a nw th" style="left:551.8px;width:138.20000000000005px;font-size:17.5px">Nhận</div>
<div class="a nw th" style="left:690px;width:158.60000000000002px;font-size:17.5px">Số lượng</div>
<div class="a nw th" style="left:848.6px;width:424.6px;font-size:17.5px">Mục đích</div>
<div class="a nw th" style="left:1273.2px;width:144.29999999999995px;font-size:17.5px">Thời gian</div>
<div class="a" style="left:438.5px;top:663.00px;width:979px;height:49.24px;background:#f9f9f9;border-bottom:1.2px solid #dedede"></div>
<div class="a" style="left:551.1999999999999px;top:663.00px;width:1.2px;height:49.24px;background:#dedede"></div>
<div class="a" style="left:689.4px;top:663.00px;width:1.2px;height:49.24px;background:#dedede"></div>
<div class="a" style="left:848.0px;top:663.00px;width:1.2px;height:49.24px;background:#dedede"></div>
<div class="a" style="left:1272.6000000000001px;top:663.00px;width:1.2px;height:49.24px;background:#dedede"></div>
<div class="a nw" style="left:438.5px;width:113.29999999999995px;top:679.0px;text-align:center;font-size:18px;color:#3f7cb8">QQTT</div>
<div class="a nw" style="left:551.8px;width:138.20000000000005px;top:679.0px;text-align:center;font-size:18px;color:#3f7cb8">boy8xhd</div>
<div class="a nw" style="left:690px;width:136px;top:679.0px;text-align:right;font-size:18.4px;color:#333">-9999 <span style="font-size:14.5px;color:#f0a040">bạc</span></div>
<div class="a nw" style="left:870px;top:679.0px;font-size:18.2px;color:#333">chuyen khoan</div>
<div class="a nw" style="left:1273.2px;width:120.79999999999995px;top:678.0px;text-align:right;font-size:15.5px;color:#333">8<sup style="font-size:10px;vertical-align:6px">h</sup>25 16/1</div>
<div class="a" style="left:438.5px;top:712.24px;width:979px;height:49.24px;background:#fff;border-bottom:1.2px solid #dedede"></div>
<div class="a" style="left:551.1999999999999px;top:712.24px;width:1.2px;height:49.24px;background:#dedede"></div>
<div class="a" style="left:689.4px;top:712.24px;width:1.2px;height:49.24px;background:#dedede"></div>
<div class="a" style="left:848.0px;top:712.24px;width:1.2px;height:49.24px;background:#dedede"></div>
<div class="a" style="left:1272.6000000000001px;top:712.24px;width:1.2px;height:49.24px;background:#dedede"></div>
<div class="a nw" style="left:438.5px;width:113.29999999999995px;top:728.2px;text-align:center;font-size:18px;color:#3f7cb8">QQTT</div>
<div class="a nw" style="left:551.8px;width:138.20000000000005px;top:728.2px;text-align:center;font-size:18px;color:#3f7cb8">star8x</div>
<div class="a nw" style="left:690px;width:136px;top:728.2px;text-align:right;font-size:18.4px;color:#333">-9999 <span style="font-size:14.5px;color:#f0a040">bạc</span></div>
<div class="a nw" style="left:870px;top:728.2px;font-size:18.2px;color:#333">chuyen khoan</div>
<div class="a nw" style="left:1273.2px;width:120.79999999999995px;top:727.2px;text-align:right;font-size:15.5px;color:#333">8<sup style="font-size:10px;vertical-align:6px">h</sup>25 16/1</div>
<div class="a" style="left:438.5px;top:761.48px;width:979px;height:49.24px;background:#f9f9f9;border-bottom:1.2px solid #dedede"></div>
<div class="a" style="left:551.1999999999999px;top:761.48px;width:1.2px;height:49.24px;background:#dedede"></div>
<div class="a" style="left:689.4px;top:761.48px;width:1.2px;height:49.24px;background:#dedede"></div>
<div class="a" style="left:848.0px;top:761.48px;width:1.2px;height:49.24px;background:#dedede"></div>
<div class="a" style="left:1272.6000000000001px;top:761.48px;width:1.2px;height:49.24px;background:#dedede"></div>
<div class="a nw" style="left:438.5px;width:113.29999999999995px;top:777.5px;text-align:center;font-size:18px;color:#3f7cb8">QQTT</div>
<div class="a nw" style="left:551.8px;width:138.20000000000005px;top:777.5px;text-align:center;font-size:18px;color:#3f7cb8">admin</div>
<div class="a nw" style="left:690px;width:136px;top:777.5px;text-align:right;font-size:18.4px;color:#333">-9999 <span style="font-size:14.5px;color:#f0a040">bạc</span></div>
<div class="a nw" style="left:870px;top:777.5px;font-size:18.2px;color:#333">Chơi vé số may mắn số : 19,</div>
<div class="a nw" style="left:1273.2px;width:120.79999999999995px;top:776.5px;text-align:right;font-size:15.5px;color:#333">8<sup style="font-size:10px;vertical-align:6px">h</sup>24 16/1</div>
<div class="a" style="left:438.5px;top:810.72px;width:979px;height:49.24px;background:#fff;border-bottom:1.2px solid #dedede"></div>
<div class="a" style="left:551.1999999999999px;top:810.72px;width:1.2px;height:49.24px;background:#dedede"></div>
<div class="a" style="left:689.4px;top:810.72px;width:1.2px;height:49.24px;background:#dedede"></div>
<div class="a" style="left:848.0px;top:810.72px;width:1.2px;height:49.24px;background:#dedede"></div>
<div class="a" style="left:1272.6000000000001px;top:810.72px;width:1.2px;height:49.24px;background:#dedede"></div>
<div class="a nw" style="left:438.5px;width:113.29999999999995px;top:826.7px;text-align:center;font-size:18px;color:#3f7cb8">admin</div>
<div class="a nw" style="left:551.8px;width:138.20000000000005px;top:826.7px;text-align:center;font-size:18px;color:#3f7cb8">QQTT</div>
<div class="a nw" style="left:690px;width:136px;top:826.7px;text-align:right;font-size:18.4px;color:#333">+20000 <span style="font-size:14.5px;color:#f0a040">bạc</span></div>
<div class="a nw" style="left:870px;top:826.7px;font-size:18.2px;color:#333">Cho vay bạc tính lãi</div>
<div class="a nw" style="left:1273.2px;width:120.79999999999995px;top:825.7px;text-align:right;font-size:15.5px;color:#333">8<sup style="font-size:10px;vertical-align:6px">h</sup>24 16/1</div>
<div class="a" style="left:438.5px;top:859.96px;width:979px;height:49.24px;background:#f9f9f9;border-bottom:1.2px solid #dedede"></div>
<div class="a" style="left:551.1999999999999px;top:859.96px;width:1.2px;height:49.24px;background:#dedede"></div>
<div class="a" style="left:689.4px;top:859.96px;width:1.2px;height:49.24px;background:#dedede"></div>
<div class="a" style="left:848.0px;top:859.96px;width:1.2px;height:49.24px;background:#dedede"></div>
<div class="a" style="left:1272.6000000000001px;top:859.96px;width:1.2px;height:49.24px;background:#dedede"></div>
<div class="a nw" style="left:438.5px;width:113.29999999999995px;top:876.0px;text-align:center;font-size:18px;color:#3f7cb8">QQTT</div>
<div class="a nw" style="left:551.8px;width:138.20000000000005px;top:876.0px;text-align:center;font-size:18px;color:#3f7cb8">admin</div>
<div class="a nw" style="left:690px;width:136px;top:876.0px;text-align:right;font-size:18.4px;color:#333">-40 <span style="font-size:14.5px;color:#f0a040">bạc</span></div>
<div class="a nw" style="left:870px;top:876.0px;font-size:18.2px;color:#333">Reset VIP</div>
<div class="a nw" style="left:1273.2px;width:120.79999999999995px;top:875.0px;text-align:right;font-size:15.5px;color:#333">8<sup style="font-size:10px;vertical-align:6px">h</sup>7 16/1</div>
<div class="a" style="left:438.5px;top:909.20px;width:979px;height:49.24px;background:#fff;border-bottom:1.2px solid #dedede"></div>
<div class="a" style="left:551.1999999999999px;top:909.20px;width:1.2px;height:49.24px;background:#dedede"></div>
<div class="a" style="left:689.4px;top:909.20px;width:1.2px;height:49.24px;background:#dedede"></div>
<div class="a" style="left:848.0px;top:909.20px;width:1.2px;height:49.24px;background:#dedede"></div>
<div class="a" style="left:1272.6000000000001px;top:909.20px;width:1.2px;height:49.24px;background:#dedede"></div>
<div class="a nw" style="left:438.5px;width:113.29999999999995px;top:925.2px;text-align:center;font-size:18px;color:#3f7cb8">QQTT</div>
<div class="a nw" style="left:551.8px;width:138.20000000000005px;top:925.2px;text-align:center;font-size:18px;color:#3f7cb8">admin</div>
<div class="a nw" style="left:690px;width:136px;top:925.2px;text-align:right;font-size:18.4px;color:#333">-40 <span style="font-size:14.5px;color:#f0a040">bạc</span></div>
<div class="a nw" style="left:870px;top:925.2px;font-size:18.2px;color:#333">Reset VIP</div>
<div class="a nw" style="left:1273.2px;width:120.79999999999995px;top:924.2px;text-align:right;font-size:15.5px;color:#333">5<sup style="font-size:10px;vertical-align:6px">h</sup>31 16/1</div>
<div class="a" style="left:438.5px;top:958.44px;width:979px;height:49.24px;background:#f9f9f9;border-bottom:1.2px solid #dedede"></div>
<div class="a" style="left:551.1999999999999px;top:958.44px;width:1.2px;height:49.24px;background:#dedede"></div>
<div class="a" style="left:689.4px;top:958.44px;width:1.2px;height:49.24px;background:#dedede"></div>
<div class="a" style="left:848.0px;top:958.44px;width:1.2px;height:49.24px;background:#dedede"></div>
<div class="a" style="left:1272.6000000000001px;top:958.44px;width:1.2px;height:49.24px;background:#dedede"></div>
<div class="a nw" style="left:438.5px;width:113.29999999999995px;top:974.4px;text-align:center;font-size:18px;color:#3f7cb8">QQTT</div>
<div class="a nw" style="left:551.8px;width:138.20000000000005px;top:974.4px;text-align:center;font-size:18px;color:#3f7cb8">admin</div>
<div class="a nw" style="left:690px;width:136px;top:974.4px;text-align:right;font-size:18.4px;color:#333">-40 <span style="font-size:14.5px;color:#f0a040">bạc</span></div>
<div class="a nw" style="left:870px;top:974.4px;font-size:18.2px;color:#333">Reset VIP</div>
<div class="a nw" style="left:1273.2px;width:120.79999999999995px;top:973.4px;text-align:right;font-size:15.5px;color:#333">21<sup style="font-size:10px;vertical-align:6px">h</sup>3 15/1</div>
<div class="a" style="left:438.5px;top:1007.68px;width:979px;height:49.24px;background:#fff;border-bottom:1.2px solid #dedede"></div>
<div class="a" style="left:551.1999999999999px;top:1007.68px;width:1.2px;height:49.24px;background:#dedede"></div>
<div class="a" style="left:689.4px;top:1007.68px;width:1.2px;height:49.24px;background:#dedede"></div>
<div class="a" style="left:848.0px;top:1007.68px;width:1.2px;height:49.24px;background:#dedede"></div>
<div class="a" style="left:1272.6000000000001px;top:1007.68px;width:1.2px;height:49.24px;background:#dedede"></div>
<div class="a nw" style="left:438.5px;width:113.29999999999995px;top:1023.7px;text-align:center;font-size:18px;color:#3f7cb8">QQTT</div>
<div class="a nw" style="left:551.8px;width:138.20000000000005px;top:1023.7px;text-align:center;font-size:18px;color:#3f7cb8">admin</div>
<div class="a nw" style="left:690px;width:136px;top:1023.7px;text-align:right;font-size:18.4px;color:#333">-700 <span style="font-size:14.5px;color:#f0a040">bạc</span></div>
<div class="a nw" style="left:870px;top:1023.7px;font-size:18.2px;color:#333">Quay số Vui: vào kèo 1432032 (PET 1)</div>
<div class="a nw" style="left:1273.2px;width:120.79999999999995px;top:1022.7px;text-align:right;font-size:15.5px;color:#333">7<sup style="font-size:10px;vertical-align:6px">h</sup>10 15/1</div>
<div class="a" style="left:438.5px;top:1056.92px;width:979px;height:49.24px;background:#f9f9f9;border-bottom:1.2px solid #dedede"></div>
<div class="a" style="left:551.1999999999999px;top:1056.92px;width:1.2px;height:49.24px;background:#dedede"></div>
<div class="a" style="left:689.4px;top:1056.92px;width:1.2px;height:49.24px;background:#dedede"></div>
<div class="a" style="left:848.0px;top:1056.92px;width:1.2px;height:49.24px;background:#dedede"></div>
<div class="a" style="left:1272.6000000000001px;top:1056.92px;width:1.2px;height:49.24px;background:#dedede"></div>
<div class="a nw" style="left:438.5px;width:113.29999999999995px;top:1072.9px;text-align:center;font-size:18px;color:#3f7cb8">QQTT</div>
<div class="a nw" style="left:551.8px;width:138.20000000000005px;top:1072.9px;text-align:center;font-size:18px;color:#3f7cb8">admin</div>
<div class="a nw" style="left:690px;width:136px;top:1072.9px;text-align:right;font-size:18.4px;color:#333">-700 <span style="font-size:14.5px;color:#f0a040">bạc</span></div>
<div class="a nw" style="left:870px;top:1072.9px;font-size:18.2px;color:#333">Quay số Vui: vào kèo 1432031 (PET 1)</div>
<div class="a nw" style="left:1273.2px;width:120.79999999999995px;top:1071.9px;text-align:right;font-size:15.5px;color:#333">7<sup style="font-size:10px;vertical-align:6px">h</sup>9 15/1</div>
<div class="a" style="left:381px;top:333px;width:5px;height:745px;background:linear-gradient(90deg,rgba(10,30,50,0),rgba(10,30,50,.55))"></div>
<div class="a" style="left:0;top:1078px;width:1920px;height:2px;background:#0e1218"></div>
<div class="a" style="left:1462.4px;top:320.7px;width:300.8px;height:47.3px;background:#4289c8;border-radius:6px"></div>
<svg class="a" style="left:1519px;top:330px" width="24" height="28" viewBox="0 0 24 28"><g fill="#fff"><path d="M6 8L7.5 2C9 1 10.5 1.5 12 2C13.5 1.5 15 1 16.5 2L18 8Z"/><rect x="2.5" y="6.5" width="19" height="3" rx="1"/><path d="M5 9.5H19V12C19 15 16.5 17.5 12 17.5C7.5 17.5 5 15 5 12Z"/><path d="M1.5 27C1 21 3 17 7.5 16.5H16.5C21 17 23 21 22.5 27Z"/></g><g fill="#4289c8"><rect x="7" y="11" width="3.5" height="1.6"/><rect x="13.5" y="11" width="3.5" height="1.6"/><path d="M10 19L12 26L14 19L12 20.5Z"/></g></svg>
<div class="a nw" style="left:1547.5px;top:333.5px;font-size:19.4px;color:#fff">Đã bảo vệ ACC/IP</div>
<div class="a" style="left:1463px;top:383.6px;width:300px;height:272.4px;background:#fff;border-radius:5px;border-top:4.6px solid #428bca"></div>
<svg class="a" style="left:1486px;top:403px" width="19" height="23" viewBox="0 0 19 23"><defs><linearGradient id="fg" x1="0" y1="0" x2="0" y2="1"><stop offset="0" stop-color="#ff9a30"/><stop offset="1" stop-color="#f23c0c"/></linearGradient></defs><path d="M9 1C10 6 16 8 17 14C18 19 14 22 9.5 22C5 22 1.5 19 2 14C2.5 10 5 9 5.5 6C7 8 7 10 7.5 11C8.5 8 9.5 5 9 1Z" fill="url(#fg)"/><path d="M9.5 13C10.5 15 12.5 16 12.5 18.5C12.5 20.5 11 22 9.5 22C8 22 6.5 21 6.5 19C6.5 17 8.5 16 9.5 13Z" fill="#fff"/></svg>
<div class="a nw" style="left:1513.5px;top:397px;font-size:25.2px;color:#333">Sự kiện 08:29:55</div>
<div class="a" style="left:1484px;top:452px;line-height:0"><svg width="30" height="20" viewBox="0 0 30 20"><rect x="1" y="1.5" width="28" height="17" fill="none" stroke="#666" stroke-width="2.6"/><path d="M1 6C4 6 6 4 6 1.5M29 6C26 6 24 4 24 1.5M1 14C4 14 6 16 6 18.5M29 14C26 14 24 16 24 18.5" stroke="#666" stroke-width="2" fill="none"/><ellipse cx="15" cy="10" rx="5.5" ry="6" fill="none" stroke="#666" stroke-width="2"/><path d="M13.5 7.5L15.5 6.5V13.5" stroke="#666" stroke-width="1.8" fill="none"/></svg></div>
<div class="a nw" style="left:1522px;top:449.5px;font-size:18.6px;color:#3f7cb8">Nạp thẻ Reset</div>
<div class="a nw" style="left:1684px;top:450.4px;width:43px;height:23.3px;border-radius:12px;background:#f0a23c;color:#fff;font-weight:bold;font-size:13px;line-height:23.3px;text-align:center;letter-spacing:-0.6px">25%</div>
<div class="a" style="left:1484px;top:490px;line-height:0"><svg width="28" height="28" viewBox="0 0 28 28"><g fill="#666"><circle cx="14" cy="3.5" r="1.6" opacity=".5"/><circle cx="21.5" cy="6.5" r="1.7" opacity=".6"/><circle cx="24.5" cy="14" r="1.9" opacity=".7"/><circle cx="21.5" cy="21.5" r="2.1" opacity=".8"/><circle cx="14" cy="24.5" r="2.3"/><circle cx="6.5" cy="21.5" r="2.5"/><circle cx="3.5" cy="14" r="2.7"/><circle cx="6.5" cy="6.5" r="2"/></g></svg></div>
<div class="a nw" style="left:1522px;top:490.5px;font-size:18.6px;color:#3f7cb8">Spin Rồng</div>
<div class="a nw" style="left:1611.6px;top:491.4px;width:39.40000000000009px;height:23.3px;border-radius:12px;background:#f0a23c;color:#fff;font-weight:bold;font-size:13px;line-height:23.3px;text-align:center;letter-spacing:-0.6px">mới</div>
<div class="a" style="left:1484px;top:530.5px;line-height:0"><svg width="26" height="26" viewBox="0 0 26 26"><path d="M13 7C10 7 5 6 5 3C5 0.5 9 0.5 13 7C17 0.5 21 0.5 21 3C21 6 16 7 13 7Z" fill="none" stroke="#666" stroke-width="2"/><rect x="1" y="7" width="24" height="6" fill="#666"/><rect x="3" y="13" width="20" height="12" fill="#666"/><rect x="11.5" y="7" width="3" height="18" fill="#fff"/></svg></div>
<div class="a nw" style="left:1522px;top:531.0px;font-size:18.6px;color:#3f7cb8">Sói Hoàng Kim</div>
<div class="a nw" style="left:1651px;top:531.9px;width:37.5px;height:23.3px;border-radius:12px;background:#f0a23c;color:#fff;font-weight:bold;font-size:13px;line-height:23.3px;text-align:center;letter-spacing:-0.6px">10k</div>
<div class="a" style="left:1484px;top:571px;line-height:0"><svg width="26" height="26" viewBox="0 0 26 26"><circle cx="13" cy="13" r="11" fill="none" stroke="#666" stroke-width="2.4"/><path d="M13 8.5L17.5 12L16 17H10L8.5 12Z" fill="#666"/><path d="M13 2.5V8.5M17.5 12L23 10M16 17L19.5 22M10 17L6.5 22M8.5 12L3 10" stroke="#666" stroke-width="2.2"/><circle cx="13" cy="3" r="2.5" fill="#666"/><circle cx="22.5" cy="10" r="2.5" fill="#666"/><circle cx="19.5" cy="21.5" r="2.5" fill="#666"/><circle cx="6.5" cy="21.5" r="2.5" fill="#666"/><circle cx="3.5" cy="10" r="2.5" fill="#666"/></svg></div>
<div class="a nw" style="left:1522px;top:571.5px;font-size:18.6px;color:#3f7cb8">Bóng đá</div>
<div class="a nw" style="left:1596.3px;top:572.4px;width:46.100000000000136px;height:23.3px;border-radius:12px;background:#f0a23c;color:#fff;font-weight:bold;font-size:13px;line-height:23.3px;text-align:center;letter-spacing:-0.6px">2020</div>
<div class="a" style="left:1484px;top:612px;line-height:0"><svg width="28" height="26" viewBox="0 0 28 26"><path d="M3 1L9 6C12 5.5 16 5.5 19 6L25 1L25.5 9C27 11 27 13 27 15C27 22 22 25 14 25C6 25 1 22 1 15C1 13 1 11 2.5 9Z" fill="#666"/><ellipse cx="14" cy="17" rx="10" ry="6" fill="#fff"/><ellipse cx="9.5" cy="17.5" rx="1.8" ry="2.3" fill="#666"/><ellipse cx="18.5" cy="17.5" rx="1.8" ry="2.3" fill="#666"/></svg></div>
<div class="a nw" style="left:1522px;top:612.5px;font-size:18.6px;color:#3f7cb8">Truy sát lệnh</div>
<div class="a nw" style="left:1689px;top:613.4px;width:38px;height:23.3px;border-radius:12px;background:#f0a23c;color:#fff;font-weight:bold;font-size:13px;line-height:23.3px;text-align:center;letter-spacing:-0.6px">hot</div>
<div class="a" style="left:1462.7px;top:685px;width:300.5px;height:157.8px;background:#f75c2e;border-radius:5px"></div>
<svg class="a" style="left:1503px;top:720px" width="50" height="46" viewBox="0 0 50 46"><path d="M33 24C38 20 44 14 46 2C44 10 38 17 30 20" stroke="#fcefe8" stroke-width="1.6" fill="none"/><g fill="#fcefe8"><path d="M18 13L22 10L27 11L29 15L27 18L22 18Z"/><path d="M2 25L22 19L27 21L18 25L4 27Z"/><path d="M20 20L30 19L34 25L41 37L44 39L32 40L26 37L24 42L20 41L22 32L19 26Z"/></g></svg>
<div class="a nw" style="left:1601.5px;top:713px;font-size:50.5px;color:#fbeee8">19/01</div>
<div class="a nw" style="left:1490px;top:788px;font-size:19.2px;color:#fbeee8">x2 Exp Master</div>
<div class="a" style="left:1462.6px;top:845px;width:300.2px;height:200px;background:#fff;border-radius:5px;border-top:4.4px solid #428bca"></div>
<div class="a nw" style="left:1485px;top:857px;font-size:26.4px;color:#444">Thăm dò</div>
<div class="a nw" style="left:1485.5px;top:904.0px;font-size:18.7px;color:#444">Bạn có muốn block tất cả</div>
<div class="a nw" style="left:1485.5px;top:936.2px;font-size:18.7px;color:#444">account sử dụng auto PK,</div>
<div class="a nw" style="left:1485.5px;top:968.8px;font-size:18.7px;color:#444">auto chạy bãi ? <span style="color:#3f7cb8">» Kết quả</span></div>
<div class="a" style="left:1485px;top:997.7px;width:254px;height:35px;border:1.2px solid #c8c8c8;border-radius:5px;background:linear-gradient(#fff,#e6e6e6)"></div>
<div class="a" style="left:1612.5px;top:998px;width:1.2px;height:34px;background:#c8c8c8"></div>
<svg class="a" style="left:1514px;top:1008px" width="16" height="14" viewBox="0 0 16 14"><path d="M8 13.5L1.5 7C-0.5 5 0.5 1 4 1C6 1 7 2 8 3.5C9 2 10 1 12 1C15.5 1 16.5 5 14.5 7Z" fill="#333"/></svg>
<div class="a nw" style="left:1533px;top:1005px;font-size:16.5px;color:#444">Đồng ý</div>
<svg class="a" style="left:1634px;top:1008px" width="17" height="14" viewBox="0 0 17 14"><path d="M8.5 13.5L2 7C0 5 1 1 4.5 1C6.5 1 7.5 2 8.5 3.5C9.5 2 10.5 1 12.5 1C16 1 17 5 15 7Z" fill="#333"/><path d="M1 7.5H5.5L7 5L9 10L10.5 7.5H16" stroke="#fff" stroke-width="1.5" fill="none"/></svg>
<div class="a nw" style="left:1654px;top:1005px;font-size:16.5px;color:#444">Phản đối</div>
<div class="a" style="left:1462.6px;top:1074.5px;width:300.2px;height:10px;background:#fff;border-radius:5px;border-top:4.4px solid #428bca"></div>
<div class="a" style="left:1704px;top:864px;width:168px;height:168px;border-radius:50%;background:#127ddc;box-shadow:0 3px 8px rgba(0,0,0,.25)"></div>
<svg class="a" style="left:1768px;top:933px" width="40" height="28" viewBox="0 0 40 28"><path d="M4 23L20 7L36 23" stroke="#fff" stroke-width="4.6" fill="none"/></svg>
<svg class="a" style="left:1885px;top:935px" width="35" height="78" viewBox="0 0 35 78"><path d="M35 1H6C3 1 1 3 1 6V48L35 74Z" fill="#5a5a5a"/><rect x="7" y="9" width="28" height="28" fill="#0f4a85"/><circle cx="20" cy="23" r="11" fill="#bcc6d2"/><path d="M11 23H29M15 19.5L11 23L15 26.5M25 19.5L29 23L25 26.5" stroke="#0f4a85" stroke-width="2.4" fill="none"/></svg>
<svg class="a" style="left:1903px;top:154px" width="13" height="9" viewBox="0 0 13 9"><path d="M0.5 8.5L6.5 1.5L12.5 8.5Z" fill="#a3a3a3"/></svg>
<svg class="a" style="left:1903px;top:1061px" width="13" height="9" viewBox="0 0 13 9"><path d="M0.5 0.5L6.5 7.5L12.5 0.5Z" fill="#505050"/></svg>
<svg class="a" style="left:1138px;top:555px" width="44" height="62" viewBox="0 0 44 62"><defs><linearGradient id="cg" x1="0" y1="0" x2="1" y2="1"><stop offset="0" stop-color="#fff"/><stop offset="1" stop-color="#d8d8d8"/></linearGradient></defs><path d="M3.5 3.5V51.5L15.8 40.5L23.5 56L30.5 52L24.5 39.5H37.5V36Z" fill="url(#cg)" stroke="#101018" stroke-width="2.1" stroke-linejoin="round"/><path d="M3.3 2.5V52" stroke="#101018" stroke-width="3.4"/></svg>
</body></html>
